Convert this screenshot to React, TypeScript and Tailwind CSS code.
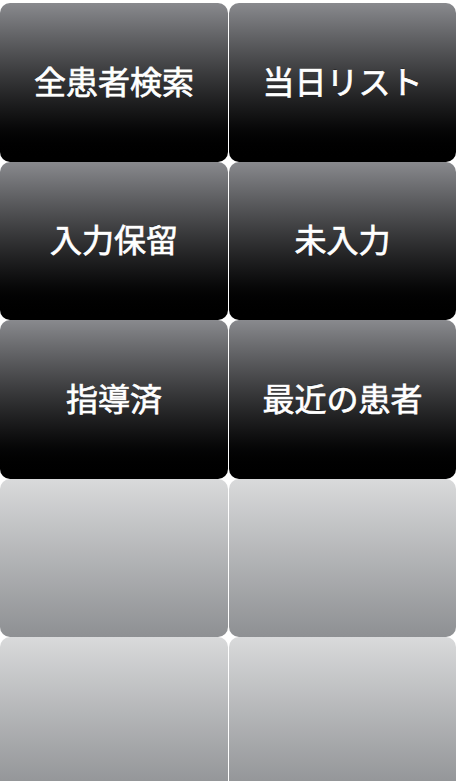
import React from "react";

const labels = ["全患者検索", "当日リスト", "入力保留", "未入力", "指導済", "最近の患者"];
const heights = ["h-[159px]", "h-[158px]", "h-[159px]", "h-[158px]", "h-[159px]"];

export default function App() {
  const rows = [0, 1, 2, 3, 4];
  return (
    <div className="w-[460px] h-[781px] overflow-hidden bg-white pt-[3px]">
      <div className="flex flex-col w-[456px]">
        {rows.map((r) => (
          <div key={r} className={`flex gap-px ${heights[r]}`}>
            {[0, 1].map((c) => {
              const idx = r * 2 + c;
              const label = labels[idx];
              const dark = idx < 6;
              return (
                <div
                  key={c}
                  className={
                    (c === 0 ? "w-[228px] " : "w-[227px] ") +
                    "h-full rounded-[10px] flex items-center justify-center pb-[6px] " +
                    (dark
                      ? "bg-gradient-to-b from-[#898a8e] to-[#000000]"
                      : "bg-gradient-to-b from-[#d9dadb] to-[#8e9093]")
                  }
                >
                  {label && (
                    <span className="text-white font-normal text-[32px] leading-none [font-family:'Noto_Sans_CJK_JP',sans-serif] [-webkit-text-stroke:0.7px_white] [text-shadow:0_-1px_0_rgba(0,0,0,0.4)]">
                      {label}
                    </span>
                  )}
                </div>
              );
            })}
          </div>
        ))}
      </div>
    </div>
  );
}
